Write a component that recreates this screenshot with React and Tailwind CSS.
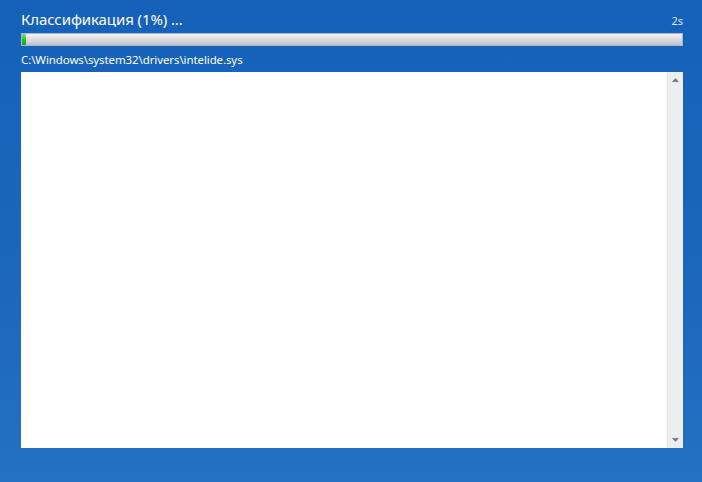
import React from 'react';

const ScrollArrow = ({ up }) => (
  <svg width="7" height="4" viewBox="0 0 7 4" className="block">
    {up ? (
      <path d="M0 4 L3.5 0 L7 4 Z" fill="#7a7f87" />
    ) : (
      <path d="M0 0 L7 0 L3.5 4 Z" fill="#7a7f87" />
    )}
  </svg>
);

export default function App() {
  return (
    <div
      className="w-[702px] h-[482px] overflow-hidden bg-gradient-to-b from-[#1560b9] via-[#1b66bd] to-[#2470c2] pl-[21px] pr-[19px] pt-[7px]"
      style={{ fontFamily: '"Noto Sans", "Open Sans", sans-serif' }}
    >
      {/* Header */}
      <div className="flex items-end justify-between h-[22px]">
        <span className="text-[15px] leading-[20px] text-white tracking-[-0.1px]">Классификация (1%) ...</span>
        <span className="text-[11px] leading-[16px] text-[#dfe9f7]">2s</span>
      </div>

      {/* Progress bar */}
      <div className="mt-[4px] h-[13px] border border-[#a9b4c4] bg-gradient-to-b from-[#f4f4f4] via-[#dcdcdc] to-[#bfc4cc] flex">
        <div className="w-[4px] h-full bg-gradient-to-b from-[#7ee07e] via-[#1ec81e] to-[#0fa80f]" />
      </div>

      {/* Current file */}
      <div className="mt-[6px] text-[11.5px] leading-[15px] text-white tracking-[-0.1px]">
        C:\Windows\system32\drivers\intelide.sys
      </div>

      {/* Log box */}
      <div className="mt-[5px] h-[376px] bg-white flex">
        <div className="flex-1" />
        <div className="w-[16px] bg-[#eceeef] border-l border-[#e2e4e6] flex flex-col items-center justify-between py-[6px]">
          <ScrollArrow up />
          <ScrollArrow />
        </div>
      </div>
    </div>
  );
}
